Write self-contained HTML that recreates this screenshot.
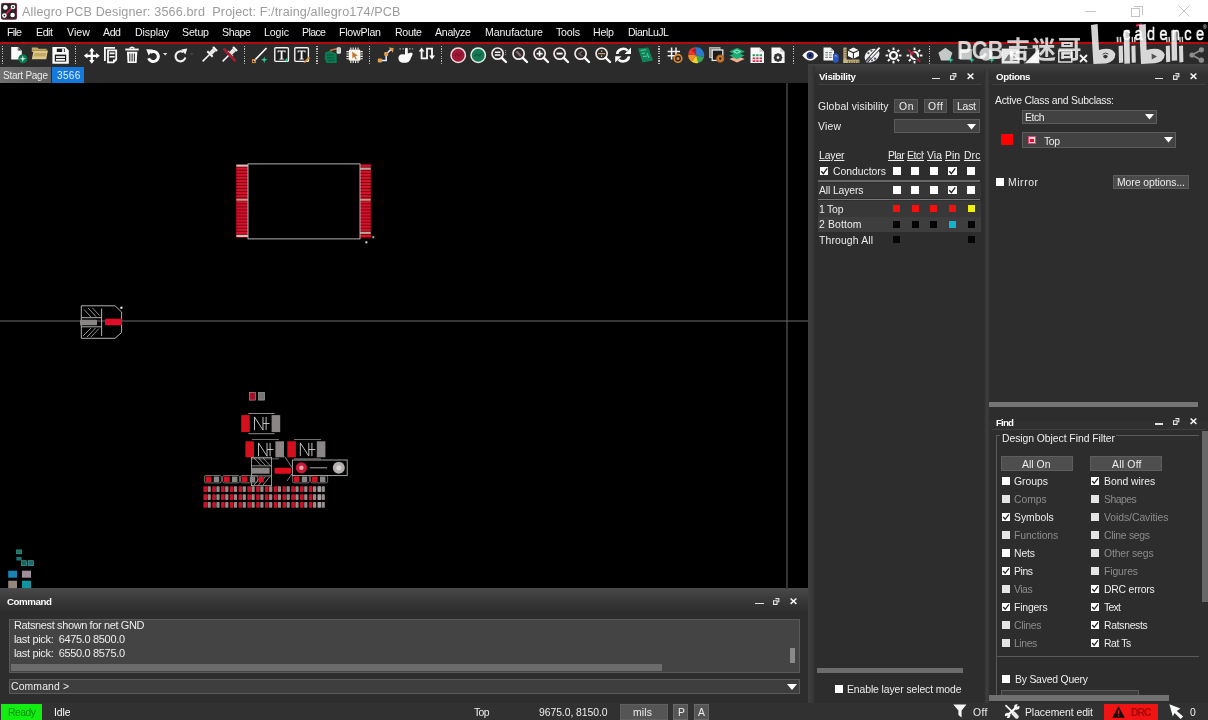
<!DOCTYPE html>
<html lang="en"><head><meta charset="utf-8"><title>Allegro PCB Designer: 3566.brd</title>
<style>
html,body{margin:0;padding:0;background:#2d2d2d;overflow:hidden}
#app{position:relative;width:1208px;height:720px;overflow:hidden;background:#2d2d2d;font-family:"Liberation Sans", sans-serif;}
#app div,#app span,#app svg{position:absolute;box-sizing:border-box}
#app span{white-space:pre;line-height:1;will-change:transform;}
#app svg{overflow:visible}
</style></head><body><div id="app">
<div style="left:0px;top:0px;width:1208px;height:22px;background:#ffffff;"></div>
<svg style="left:1.4px;top:3px" width="16" height="16.6" viewBox="0 0 16 16.6"><rect x="0" y="0" width="16" height="16.6" rx="2.2" fill="#2a2228"/><rect x="0.4" y="0.4" width="15.2" height="15.8" rx="2" fill="none" stroke="#8a3048" stroke-width="0.8"/><path d="M3.4 12.6 L12 4" stroke="#c02848" stroke-width="1.8"/><circle cx="4.4" cy="4.4" r="2.3" fill="#fff"/><circle cx="12" cy="4" r="2.3" fill="#fff"/><circle cx="12" cy="4" r="0.9" fill="#222"/><circle cx="3.4" cy="12.6" r="2.3" fill="#fff"/><circle cx="3.4" cy="12.6" r="0.9" fill="#222"/><circle cx="11.6" cy="12" r="2.3" fill="#fff"/></svg>
<div style="left:1084.5px;top:10.5px;width:11px;height:1px;background:#c8c8c8;"></div>
<div style="left:1131px;top:7.5px;width:9px;height:9px;background:transparent;border:1px solid #c4c4c4"></div>
<div style="left:1133.5px;top:5.5px;width:9px;height:9px;background:transparent;border:1px solid #c4c4c4;border-left:none;border-bottom:none"></div>
<svg style="left:1178px;top:5px" width="12" height="12" viewBox="0 0 12 12"><path d="M0.5 0.5 L11.5 11.5 M11.5 0.5 L0.5 11.5" stroke="#c4c4c4" stroke-width="1"/></svg>
<div style="left:0px;top:22px;width:1208px;height:20px;background:#000000;"></div>
<div style="left:0px;top:42px;width:1208px;height:2px;background:#b80a0a;"></div>
<div style="left:0px;top:44px;width:1208px;height:23px;background:#2b2b2b;"></div>
<div style="left:0px;top:67px;width:808px;height:16px;background:#2b2b2b;"></div>
<div style="left:0px;top:67px;width:51.2px;height:15.6px;background:#666666;background:linear-gradient(90deg,#707070,#5e5e5e)"></div>
<div style="left:52px;top:67px;width:32px;height:15.6px;background:#1478dc;"></div>
<div style="left:0px;top:82.6px;width:808px;height:505.2px;background:#000000;"></div>
<div style="left:808px;top:64px;width:400px;height:14px;background:#383838;background:linear-gradient(180deg,#424242 0,#3a3a3a 35%,#313131 75%,#303030)"></div>
<div style="left:808px;top:66px;width:7px;height:637px;background:#3a3a3a;background:linear-gradient(90deg,#3e3e3e 0,#3a3a3a 60%,#2e2e2e)"></div>
<div style="left:984px;top:71px;width:6px;height:632px;background:#383838;background:linear-gradient(90deg,#2d2d2d,#404040 50%,#2d2d2d)"></div>
<div style="left:816px;top:76px;width:168px;height:8px;background:#303030;"></div>
<div style="left:818px;top:84px;width:164px;height:1px;background:#3f3f3f;"></div>
<div style="left:931.7px;top:78.1px;width:8.6px;height:1.4px;background:#e0e0e0;"></div>
<svg style="left:949.8px;top:73px" width="6.4" height="7" viewBox="0 0 7 7.4"><path d="M2.6 0.6 H6.4 V4 H4.6 M0.6 2.8 H4.4 V6.8 H0.6 Z" stroke="#e4e4e4" stroke-width="1.2" fill="none"/></svg>
<svg style="left:967px;top:73px" width="7" height="6.4" viewBox="0 0 7 6.4"><path d="M0.6 0.5 L6.4 5.9 M6.4 0.5 L0.6 5.9" stroke="#f4f4f4" stroke-width="1.5"/></svg>
<div style="left:990px;top:76px;width:218px;height:8px;background:#303030;"></div>
<div style="left:992px;top:84px;width:214px;height:1px;background:#3f3f3f;"></div>
<div style="left:1154.7px;top:78.1px;width:8.6px;height:1.4px;background:#e0e0e0;"></div>
<svg style="left:1173.3px;top:73px" width="6.4" height="7" viewBox="0 0 7 7.4"><path d="M2.6 0.6 H6.4 V4 H4.6 M0.6 2.8 H4.4 V6.8 H0.6 Z" stroke="#e4e4e4" stroke-width="1.2" fill="none"/></svg>
<svg style="left:1190px;top:73px" width="7" height="6.4" viewBox="0 0 7 6.4"><path d="M0.6 0.5 L6.4 5.9 M6.4 0.5 L0.6 5.9" stroke="#f4f4f4" stroke-width="1.5"/></svg>
<div style="left:990px;top:421.2px;width:218px;height:8px;background:#303030;"></div>
<div style="left:992px;top:429.2px;width:214px;height:1px;background:#3f3f3f;"></div>
<div style="left:1154.7px;top:423.3px;width:8.6px;height:1.4px;background:#e0e0e0;"></div>
<svg style="left:1173.3px;top:418.2px" width="6.4" height="7" viewBox="0 0 7 7.4"><path d="M2.6 0.6 H6.4 V4 H4.6 M0.6 2.8 H4.4 V6.8 H0.6 Z" stroke="#e4e4e4" stroke-width="1.2" fill="none"/></svg>
<svg style="left:1190px;top:418.2px" width="7" height="6.4" viewBox="0 0 7 6.4"><path d="M0.6 0.5 L6.4 5.9 M6.4 0.5 L0.6 5.9" stroke="#f4f4f4" stroke-width="1.5"/></svg>
<div style="left:0px;top:587.8px;width:808px;height:24px;background:#3a3a3a;background:linear-gradient(180deg,#4a4a4a 0,#3c3c3c 40%,#2f2f2f 90%,#2d2d2d)"></div>
<div style="left:755.2px;top:602.7px;width:8.6px;height:1.4px;background:#e0e0e0;"></div>
<svg style="left:773.3px;top:597.6px" width="6.4" height="7" viewBox="0 0 7 7.4"><path d="M2.6 0.6 H6.4 V4 H4.6 M0.6 2.8 H4.4 V6.8 H0.6 Z" stroke="#e4e4e4" stroke-width="1.2" fill="none"/></svg>
<svg style="left:790px;top:597.6px" width="7" height="6.4" viewBox="0 0 7 6.4"><path d="M0.6 0.5 L6.4 5.9 M6.4 0.5 L0.6 5.9" stroke="#f4f4f4" stroke-width="1.5"/></svg>
<div style="left:894px;top:98.5px;width:23.5px;height:14.5px;background:#464646;border:1px solid #585858"></div>
<div style="left:923.5px;top:98.5px;width:23.5px;height:14.5px;background:#464646;border:1px solid #585858"></div>
<div style="left:952.5px;top:98.5px;width:27.5px;height:14.5px;background:#464646;border:1px solid #585858"></div>
<div style="left:894px;top:119px;width:86px;height:14px;background:#424242;border:1px solid #5c5c5c"></div>
<svg style="left:967px;top:123.5px" width="9" height="6" viewBox="0 0 9 6"><path d="M0 0 H9 L4.5 5.5 Z" fill="#ffffff"/></svg>
<div style="left:820px;top:166.8px;width:8.4px;height:8.4px;background:#ffffff;"></div>
<svg style="left:820px;top:166.8px" width="8.4" height="8.4" viewBox="0 0 8 8"><path d="M1.2 4 L3.2 6.3 L6.9 1.3" stroke="#222" stroke-width="1.3" fill="none"/></svg>
<div style="left:892.7px;top:166.8px;width:8.4px;height:8.4px;background:#ffffff;"></div>
<div style="left:911.1px;top:166.8px;width:8.4px;height:8.4px;background:#ffffff;"></div>
<div style="left:929.7px;top:166.8px;width:8.4px;height:8.4px;background:#ffffff;"></div>
<div style="left:948.4px;top:166.8px;width:8.4px;height:8.4px;background:#ffffff;"></div>
<svg style="left:948.4px;top:166.8px" width="8.4" height="8.4" viewBox="0 0 8 8"><path d="M1.2 4 L3.2 6.3 L6.9 1.3" stroke="#222" stroke-width="1.3" fill="none"/></svg>
<div style="left:967.1px;top:166.8px;width:8.4px;height:8.4px;background:#ffffff;"></div>
<div style="left:818px;top:180px;width:162px;height:1.6px;background:#686868;"></div>
<div style="left:817.5px;top:183px;width:163px;height:15px;background:#363636;"></div>
<div style="left:892.7px;top:186px;width:8.4px;height:8.4px;background:#ffffff;"></div>
<div style="left:911.1px;top:186px;width:8.4px;height:8.4px;background:#ffffff;"></div>
<div style="left:929.7px;top:186px;width:8.4px;height:8.4px;background:#ffffff;"></div>
<div style="left:948.4px;top:186px;width:8.4px;height:8.4px;background:#ffffff;"></div>
<svg style="left:948.4px;top:186px" width="8.4" height="8.4" viewBox="0 0 8 8"><path d="M1.2 4 L3.2 6.3 L6.9 1.3" stroke="#222" stroke-width="1.3" fill="none"/></svg>
<div style="left:967.1px;top:186px;width:8.4px;height:8.4px;background:#ffffff;"></div>
<div style="left:818px;top:198.6px;width:162px;height:1.2px;background:#7a7a7a;"></div>
<div style="left:817.5px;top:201px;width:163px;height:15.5px;background:#383838;"></div>
<div style="left:893.3px;top:205.2px;width:7.2px;height:7.2px;background:#f51010;"></div>
<div style="left:911.7px;top:205.2px;width:7.2px;height:7.2px;background:#f51010;"></div>
<div style="left:930.3px;top:205.2px;width:7.2px;height:7.2px;background:#f51010;"></div>
<div style="left:949px;top:205.2px;width:7.2px;height:7.2px;background:#f51010;"></div>
<div style="left:967.7px;top:205.2px;width:7.2px;height:7.2px;background:#eef010;"></div>
<div style="left:817.5px;top:216.5px;width:163px;height:15.5px;background:#3e3e3e;"></div>
<div style="left:893.3px;top:220.8px;width:7.2px;height:7.2px;background:#050505;"></div>
<div style="left:911.7px;top:220.8px;width:7.2px;height:7.2px;background:#050505;"></div>
<div style="left:930.3px;top:220.8px;width:7.2px;height:7.2px;background:#050505;"></div>
<div style="left:949px;top:220.8px;width:7.2px;height:7.2px;background:#14b4d0;"></div>
<div style="left:967.7px;top:220.8px;width:7.2px;height:7.2px;background:#050505;"></div>
<div style="left:893.3px;top:236.2px;width:7.2px;height:7.2px;background:#050505;"></div>
<div style="left:967.7px;top:236.2px;width:7.2px;height:7.2px;background:#050505;"></div>
<div style="left:817px;top:668px;width:146px;height:5px;background:#6c6c6c;"></div>
<div style="left:834.5px;top:685px;width:8px;height:8px;background:#ffffff;"></div>
<div style="left:1022px;top:109.7px;width:134.5px;height:14px;background:#424242;border:1px solid #5c5c5c"></div>
<svg style="left:1144.5px;top:114.2px" width="9" height="6" viewBox="0 0 9 6"><path d="M0 0 H9 L4.5 5.5 Z" fill="#ffffff"/></svg>
<div style="left:1001px;top:134px;width:12px;height:11.3px;background:#ff0000;"></div>
<div style="left:1022px;top:132px;width:153.5px;height:15.5px;background:#424242;border:1px solid #5c5c5c"></div>
<svg style="left:1163.5px;top:137.25px" width="9" height="6" viewBox="0 0 9 6"><path d="M0 0 H9 L4.5 5.5 Z" fill="#ffffff"/></svg>
<div style="left:1028px;top:136.3px;width:8px;height:7.8px;background:#ffe0e6;border:1.5px solid #f0406a"></div>
<div style="left:1030.3px;top:138.5px;width:3.4px;height:3.4px;background:#f00828;"></div>
<div style="left:995.9px;top:178.1px;width:7.8px;height:7.8px;background:#ffffff;"></div>
<div style="left:1112.5px;top:174.5px;width:76px;height:14.5px;background:#4a4a4a;border:1px solid #5c5c5c"></div>
<div style="left:989px;top:401.8px;width:209px;height:5.6px;background:#767676;"></div>
<div style="left:1202px;top:431px;width:5.5px;height:171px;background:#676767;"></div>
<div style="left:996px;top:435px;width:1px;height:260px;background:#5a5a5a;"></div>
<div style="left:996px;top:435px;width:4px;height:1px;background:#5a5a5a;"></div>
<div style="left:1116px;top:435px;width:83px;height:1px;background:#5a5a5a;"></div>
<div style="left:996px;top:656px;width:203px;height:1px;background:#5a5a5a;"></div>
<div style="left:1000.5px;top:456.2px;width:72.5px;height:14.8px;background:#4e4e4e;border:1px solid #5e5e5e"></div>
<div style="left:1090px;top:456.2px;width:72px;height:14.8px;background:#4e4e4e;border:1px solid #5e5e5e"></div>
<div style="left:1001.8px;top:477px;width:8px;height:8px;background:#ffffff;"></div>
<div style="left:1001.8px;top:495px;width:8px;height:8px;background:#e4e4e4;"></div>
<div style="left:1001.8px;top:513px;width:8px;height:8px;background:#ffffff;"></div>
<svg style="left:1001.8px;top:513px" width="8" height="8" viewBox="0 0 8 8"><path d="M1.2 4 L3.2 6.3 L6.9 1.3" stroke="#222" stroke-width="1.3" fill="none"/></svg>
<div style="left:1001.8px;top:531px;width:8px;height:8px;background:#e4e4e4;"></div>
<div style="left:1001.8px;top:549px;width:8px;height:8px;background:#ffffff;"></div>
<div style="left:1001.8px;top:567px;width:8px;height:8px;background:#ffffff;"></div>
<svg style="left:1001.8px;top:567px" width="8" height="8" viewBox="0 0 8 8"><path d="M1.2 4 L3.2 6.3 L6.9 1.3" stroke="#222" stroke-width="1.3" fill="none"/></svg>
<div style="left:1001.8px;top:585px;width:8px;height:8px;background:#e4e4e4;"></div>
<div style="left:1001.8px;top:603px;width:8px;height:8px;background:#ffffff;"></div>
<svg style="left:1001.8px;top:603px" width="8" height="8" viewBox="0 0 8 8"><path d="M1.2 4 L3.2 6.3 L6.9 1.3" stroke="#222" stroke-width="1.3" fill="none"/></svg>
<div style="left:1001.8px;top:621px;width:8px;height:8px;background:#e4e4e4;"></div>
<div style="left:1001.8px;top:639px;width:8px;height:8px;background:#e4e4e4;"></div>
<div style="left:1091px;top:477px;width:8px;height:8px;background:#ffffff;"></div>
<svg style="left:1091px;top:477px" width="8" height="8" viewBox="0 0 8 8"><path d="M1.2 4 L3.2 6.3 L6.9 1.3" stroke="#222" stroke-width="1.3" fill="none"/></svg>
<div style="left:1091px;top:495px;width:8px;height:8px;background:#e4e4e4;"></div>
<div style="left:1091px;top:513px;width:8px;height:8px;background:#e4e4e4;"></div>
<div style="left:1091px;top:531px;width:8px;height:8px;background:#e4e4e4;"></div>
<div style="left:1091px;top:549px;width:8px;height:8px;background:#e4e4e4;"></div>
<div style="left:1091px;top:567px;width:8px;height:8px;background:#e4e4e4;"></div>
<div style="left:1091px;top:585px;width:8px;height:8px;background:#ffffff;"></div>
<svg style="left:1091px;top:585px" width="8" height="8" viewBox="0 0 8 8"><path d="M1.2 4 L3.2 6.3 L6.9 1.3" stroke="#222" stroke-width="1.3" fill="none"/></svg>
<div style="left:1091px;top:603px;width:8px;height:8px;background:#ffffff;"></div>
<svg style="left:1091px;top:603px" width="8" height="8" viewBox="0 0 8 8"><path d="M1.2 4 L3.2 6.3 L6.9 1.3" stroke="#222" stroke-width="1.3" fill="none"/></svg>
<div style="left:1091px;top:621px;width:8px;height:8px;background:#ffffff;"></div>
<svg style="left:1091px;top:621px" width="8" height="8" viewBox="0 0 8 8"><path d="M1.2 4 L3.2 6.3 L6.9 1.3" stroke="#222" stroke-width="1.3" fill="none"/></svg>
<div style="left:1091px;top:639px;width:8px;height:8px;background:#ffffff;"></div>
<svg style="left:1091px;top:639px" width="8" height="8" viewBox="0 0 8 8"><path d="M1.2 4 L3.2 6.3 L6.9 1.3" stroke="#222" stroke-width="1.3" fill="none"/></svg>
<div style="left:1002px;top:675px;width:8px;height:8px;background:#ffffff;"></div>
<div style="left:1001px;top:689.5px;width:138px;height:6px;background:#3c3c3c;border:1px solid #5a5a5a;border-bottom:none"></div>
<div style="left:988.5px;top:695px;width:180px;height:5.5px;background:#707070;"></div>
<div style="left:8.5px;top:618.5px;width:791.5px;height:54.2px;background:#444444;border:1px solid #5a5a5a"></div>
<div style="left:11px;top:664px;width:651px;height:7px;background:#6c6c6c;"></div>
<div style="left:789.5px;top:648px;width:5px;height:15px;background:#8a8a8a;"></div>
<div style="left:8.5px;top:678.5px;width:791.5px;height:15px;background:#3e3e3e;border:1px solid #5a5a5a"></div>
<svg style="left:787px;top:683.5px" width="10" height="6" viewBox="0 0 10 6"><path d="M0 0 H10 L5 6 Z" fill="#ffffff"/></svg>
<div style="left:0px;top:702.6px;width:1208px;height:18px;background:#313131;"></div>
<div style="left:1px;top:704px;width:41px;height:16px;background:#12ee12;"></div>
<div style="left:619.5px;top:704px;width:48.5px;height:15.6px;background:#555555;border:1px solid #606060"></div>
<div style="left:673px;top:704px;width:15px;height:15.6px;background:#555555;border:1px solid #686868"></div>
<div style="left:694px;top:704px;width:15px;height:15.6px;background:#555555;border:1px solid #686868"></div>
<svg style="left:953px;top:704px" width="14" height="14" viewBox="0 0 14 14"><path d="M0.3 0.5 H13.5 L8.6 6.5 V13.5 L5.4 11 V6.5 Z" fill="#f4f4f4"/></svg>
<svg style="left:1003px;top:703px" width="19" height="17" viewBox="1003 703 19 17"><path d="M1006 705.6 L1012.6 712.2" stroke="#f4f4f4" stroke-width="1.8" stroke-linecap="round"/><path d="M1013.6 713.4 L1016.6 716.6" stroke="#e8e8e8" stroke-width="4.2" stroke-linecap="round"/><path d="M1008.2 714.8 L1016.2 707.4" stroke="#f8f8f8" stroke-width="2.2"/><circle cx="1016.8" cy="707" r="2.7" fill="#f8f8f8"/><path d="M1016.6 706.8 L1018.2 703.4 L1020.6 705.6 Z" fill="#2b2b2b"/><circle cx="1007.6" cy="715.4" r="2.7" fill="#f8f8f8"/><path d="M1007.8 715.6 L1006.2 719 L1003.8 716.8 Z" fill="#2b2b2b"/></svg>
<div style="left:1104.2px;top:704px;width:53.6px;height:16px;background:#f01414;"></div>
<svg style="left:1111.5px;top:705.5px" width="13" height="12" viewBox="0 0 13 12"><path d="M6.5 0.3 L12.8 11.7 H0.2 Z" fill="#111"/><path d="M6.5 4 V8" stroke="#f01414" stroke-width="1.4"/><circle cx="6.5" cy="9.8" r="0.8" fill="#f01414"/></svg>
<svg style="left:1168px;top:703px" width="17" height="17" viewBox="1168 703 17 17"><path d="M1169.4 704.3 L1180.4 708.4 L1176.8 711 L1183.2 716.6 L1180.6 719 L1174.6 713 L1172.8 716.6 Z" fill="#f8f8f8"/></svg>
<div style="left:2px;top:46px;width:1.4px;height:18px;background:repeating-linear-gradient(180deg,#b8b8b8 0,#b8b8b8 1.2px,transparent 1.2px,transparent 2.4px)"></div>
<div style="left:75px;top:46px;width:1.4px;height:18px;background:repeating-linear-gradient(180deg,#b8b8b8 0,#b8b8b8 1.2px,transparent 1.2px,transparent 2.4px)"></div>
<div style="left:243.5px;top:46px;width:1.4px;height:18px;background:repeating-linear-gradient(180deg,#b8b8b8 0,#b8b8b8 1.2px,transparent 1.2px,transparent 2.4px)"></div>
<div style="left:316.2px;top:46px;width:1.4px;height:18px;background:repeating-linear-gradient(180deg,#b8b8b8 0,#b8b8b8 1.2px,transparent 1.2px,transparent 2.4px)"></div>
<div style="left:368.5px;top:46px;width:1.4px;height:18px;background:repeating-linear-gradient(180deg,#b8b8b8 0,#b8b8b8 1.2px,transparent 1.2px,transparent 2.4px)"></div>
<div style="left:441px;top:46px;width:1.4px;height:18px;background:repeating-linear-gradient(180deg,#b8b8b8 0,#b8b8b8 1.2px,transparent 1.2px,transparent 2.4px)"></div>
<div style="left:658.3px;top:46px;width:1.4px;height:18px;background:repeating-linear-gradient(180deg,#b8b8b8 0,#b8b8b8 1.2px,transparent 1.2px,transparent 2.4px)"></div>
<div style="left:793px;top:46px;width:1.4px;height:18px;background:repeating-linear-gradient(180deg,#b8b8b8 0,#b8b8b8 1.2px,transparent 1.2px,transparent 2.4px)"></div>
<div style="left:928.5px;top:46px;width:1.4px;height:18px;background:repeating-linear-gradient(180deg,#b8b8b8 0,#b8b8b8 1.2px,transparent 1.2px,transparent 2.4px)"></div>
<svg style="left:10px;top:46px" width="20" height="18" viewBox="10 46 20 18"><path d="M11.2 47 H18 L21.8 50.8 V59.6 H11.2 Z" fill="#fbfbfb"/><path d="M17.8 47 L21.8 51 H17.8 Z" fill="#3a3a3a"/><path d="M18 47.2 V50.8 H21.6" fill="none" stroke="#d0d0d0" stroke-width="0.8"/><circle cx="22.8" cy="58.8" r="4.5" fill="#0b7a50"/><path d="M22.8 55.6 L23.6 58 L26 58.8 L23.6 59.6 L22.8 62 L22 59.6 L19.6 58.8 L22 58 Z" fill="#c8f4e4"/></svg>
<svg style="left:31px;top:46px" width="18" height="15" viewBox="31 46 18 15"><path d="M31.8 47.6 H37.4 L38.6 48.8 H46.6 V52 H31.8 Z" fill="#c8ac68"/><path d="M33.6 50.4 H47.9 L46.2 59.3 H31.8 Z" fill="#e0c888"/><path d="M34.4 53 H46.4 L45.6 56.4 H33.8 Z" fill="#c4a866"/><path d="M32 50.3 H47.6" stroke="#8a7440" stroke-width="0.7"/></svg>
<svg style="left:52px;top:46px" width="18" height="18" viewBox="52 46 18 18"><path d="M52.4 47 H65.4 L68.8 50.4 V63.7 H52.4 Z" fill="#fbfbfb"/><rect x="56.8" y="48.6" width="8" height="3.4" fill="#1c1c1c"/><rect x="62.2" y="48.6" width="1.7" height="3.4" fill="#fbfbfb"/><rect x="54.8" y="54.6" width="11.4" height="7" fill="#1c1c1c"/><rect x="56" y="56.2" width="9" height="1.7" fill="#fbfbfb"/><rect x="56" y="59" width="9" height="1.7" fill="#fbfbfb"/></svg>
<svg style="left:84.2px;top:47.8px" width="15.6" height="15.6" viewBox="0 0 16 16"><path d="M8 1.5 V14.5 M1.5 8 H14.5" stroke="#fafafa" stroke-width="2.3"/><path d="M8 -0.2 L10.8 3.6 H5.2 Z M8 16.2 L10.8 12.4 H5.2 Z M-0.2 8 L3.6 5.2 V10.8 Z M16.2 8 L12.4 5.2 V10.8 Z" fill="#fafafa"/></svg>
<svg style="left:103px;top:46px" width="16" height="18" viewBox="103 46 16 18"><path d="M104.9 61 V47.8 H115" stroke="#fafafa" stroke-width="1.8" fill="none"/><path d="M108 50.4 H116.2 V59.6 L113.4 62.4 H108 Z" fill="none" stroke="#fafafa" stroke-width="1.8"/><path d="M109.6 53.4 H114.6 M109.6 56.8 H114.6" stroke="#fafafa" stroke-width="1.6"/><path d="M113 62.6 V59.4 H116.4 Z" fill="#fafafa"/></svg>
<svg style="left:124px;top:46px" width="16" height="18" viewBox="124 46 16 18"><path d="M125.3 49.5 H138.7" stroke="#fafafa" stroke-width="1.9"/><path d="M129.6 48.6 Q132 45.8 134.4 48.6" stroke="#fafafa" stroke-width="1.5" fill="none"/><path d="M126.9 51.8 H137.3 L136.6 63.1 H127.6 Z" fill="#fafafa"/><path d="M129.8 53.4 V61.4 M132.1 53.4 V61.4 M134.4 53.4 V61.4" stroke="#333" stroke-width="1.1"/></svg>
<svg style="left:145.5px;top:47px" width="22" height="16" viewBox="0 0 22 16"><path d="M4.2 5.6 A5 5 0 1 1 2.6 11.2" stroke="#fafafa" stroke-width="3" fill="none"/><path d="M0.3 2.2 L7 2.6 L2.6 8.6 Z" fill="#fafafa"/><path d="M17 6 H21.4 L19.2 8.6 Z" fill="#e0e0e0"/></svg>
<svg style="left:173px;top:47px" width="22" height="16" viewBox="0 0 22 16"><path d="M10.4 5.2 A5 5 0 1 0 12.4 10.6" stroke="#f0f0f0" stroke-width="2.1" fill="none"/><path d="M14.3 1.6 L8.2 2.4 L12.4 7.6 Z" fill="#f0f0f0"/><path d="M16.8 6.2 H20.6 L18.7 8.4 Z" fill="#4a4a4a"/></svg>
<svg style="left:200.5px;top:47px" width="16" height="16" viewBox="0 0 16 16"><g transform="rotate(45 8 8)"><rect x="5.2" y="-1.6" width="5.6" height="2.2" fill="#fafafa"/><rect x="6" y="0.6" width="4" height="5" fill="#e8e8e8"/><rect x="4.2" y="5.6" width="7.6" height="2" fill="#fafafa"/><path d="M8 7.6 V17" stroke="#fafafa" stroke-width="1.5"/></g></svg>
<svg style="left:221px;top:47px" width="16" height="16" viewBox="0 0 16 16"><g transform="rotate(45 8 8)"><rect x="5.2" y="-1.6" width="5.6" height="2.2" fill="#fafafa"/><rect x="6" y="0.6" width="4" height="5" fill="#e8e8e8"/><rect x="4.2" y="5.6" width="7.6" height="2" fill="#fafafa"/><path d="M8 7.6 V17" stroke="#fafafa" stroke-width="1.5"/></g><path d="M2.5 1.5 L14.5 14" stroke="#a81c30" stroke-width="2.6"/></svg>
<svg style="left:252.3px;top:47px" width="16" height="17" viewBox="0 0 16 17"><path d="M2 14 L14.5 1" stroke="#fafafa" stroke-width="1.7"/><rect x="0.4" y="12.6" width="3" height="3" fill="none" stroke="#e09030" stroke-width="1"/><path d="M12.2 9.5 L13 12 L15.6 12.8 L13 13.6 L12.2 16.2 L11.4 13.6 L8.8 12.8 L11.4 12 Z" fill="#2fd0a0"/></svg>
<svg style="left:273.5px;top:47px" width="16" height="16" viewBox="0 0 16 16"><rect x="0.8" y="0.8" width="13.6" height="13.6" rx="1" fill="#1e1e1e" stroke="#f4f4f4" stroke-width="1.4"/><path d="M3.6 3.4 H11.6 V5.4 H10.8 L10.4 4.6 H8.5 V11.4 L9.8 11.8 V12.4 H5.4 V11.8 L6.7 11.4 V4.6 H4.8 L4.4 5.4 H3.6 Z" fill="#fafafa"/><path d="M12.4 10.6 L13 12.4 L14.9 13 L13 13.6 L12.4 15.6 L11.8 13.6 L9.9 13 L11.8 12.4 Z" fill="#2fd0a0"/></svg>
<svg style="left:294.2px;top:47px" width="17" height="17" viewBox="0 0 17 17"><rect x="0.8" y="0.8" width="13.6" height="13.6" rx="1" fill="#1e1e1e" stroke="#f4f4f4" stroke-width="1.4"/><path d="M3.6 3.4 H11.6 V5.4 H10.8 L10.4 4.6 H8.5 V11.4 L9.8 11.8 V12.4 H5.4 V11.8 L6.7 11.4 V4.6 H4.8 L4.4 5.4 H3.6 Z" fill="#fafafa"/><path d="M10 14.8 L14.6 9.6 L16 11 L11.2 15.8 L9.6 16 Z" fill="#d89040"/></svg>
<svg style="left:323.6px;top:47px" width="17.4" height="16.4" viewBox="0 0 17.4 16.4"><path d="M1.2 5.4 L6.4 3.4 L9 5.2 L12.6 6.6 L12.8 16 H2.4 L0.6 11 Z" fill="#0c7a52"/><path d="M2.6 8.4 L9.6 7.6 M3 11 L10.4 10.6 M4 13.6 L11 13.4" stroke="#0a5c3e" stroke-width="1.3"/><path d="M6 3.6 L12.6 1.8" stroke="#c87838" stroke-width="1.6"/><rect x="12.6" y="0.2" width="4.4" height="6.6" rx="1.4" fill="#e4e4e4"/><path d="M13.6 2 H16 M13.6 4 H16" stroke="#999" stroke-width="0.7"/></svg>
<svg style="left:346px;top:47px" width="17" height="16.4" viewBox="0 0 17 16.4"><rect x="2.8" y="2.6" width="11.6" height="11.2" rx="1.4" fill="#fbf6ee"/><path d="M4.8 0.4 V2.6 M7.2 0.4 V2.6 M9.6 0.4 V2.6 M12 0.4 V2.6 M4.8 13.8 V16 M7.2 13.8 V16 M9.6 13.8 V16 M12 13.8 V16 M0.4 4.6 H2.8 M0.4 7 H2.8 M0.4 9.4 H2.8 M0.4 11.8 H2.8 M14.4 4.6 H16.8 M14.4 7 H16.8 M14.4 9.4 H16.8 M14.4 11.8 H16.8" stroke="#f4f0ea" stroke-width="1.1"/><path d="M6.2 4.8 L11.8 8.6 L9.4 9.2 L10.8 12 L9.6 12.6 L8.2 9.8 L6.4 11.4 Z" fill="#c07830"/></svg>
<svg style="left:376.6px;top:47px" width="18" height="16.4" viewBox="0 0 18 16.4"><path d="M3 13.6 H9.2 V7 L14 2.4" stroke="#20284a" stroke-width="3.4" fill="none"/><path d="M3 13.6 H9.2 V7 L14 2.4" stroke="#f0f0f0" stroke-width="1.5" fill="none"/><rect x="0.8" y="11.6" width="4.2" height="4" rx="1" fill="#e0a048"/><rect x="7.2" y="5" width="4" height="4" rx="1" fill="#e0a048"/><path d="M11.6 0.6 L16.6 1 L16 5.8 Z" fill="#e0a048"/></svg>
<svg style="left:398px;top:47px" width="16" height="16.4" viewBox="0 0 16 16.4"><path d="M1.4 1.8 H3 M4.4 1.8 H6 M11 1.8 H12.6 M13.8 1.8 H15.2" stroke="#9a9a9a" stroke-width="1.2"/><path d="M7 7.4 V1.6 Q8.4 0 9.8 1.6 V6.6 L13.2 5.4 Q15 5.6 14.6 7.6 L12.8 11.2 Q11.4 15.8 7.4 15.8 H4.4 Q1 15.4 0.4 11.6 Q0.2 8.6 2.6 7.6 Q4.6 7 7 7.4 Z" fill="#fbfbfb"/></svg>
<svg style="left:417px;top:46px" width="20" height="16" viewBox="417 46 20 16"><path d="M421.6 50 V58.3 H427 V48.6 H432 V56" stroke="#fafafa" stroke-width="1.8" fill="none"/><path d="M418.8 51.4 L421.6 47.4 L424.4 51.4 Z" fill="#fafafa"/><path d="M429 55.4 H435 L432 59.6 Z" fill="#fafafa"/></svg>
<svg style="left:449.8px;top:46.8px" width="17" height="17" viewBox="0 0 17 17"><circle cx="8.2" cy="8.2" r="7.2" fill="#a01838" stroke="#f0dede" stroke-width="1.5"/><path d="M4.5 9 L7 7 L9 9 L12 6" stroke="#7c1028" stroke-width="1.2" fill="none"/></svg>
<svg style="left:470.4px;top:46.8px" width="17" height="17" viewBox="0 0 17 17"><circle cx="8.2" cy="8.2" r="7.2" fill="#157a54" stroke="#e2f0ea" stroke-width="1.5"/><path d="M4.5 9 L7 7 L9 9 L12 6" stroke="#0e5c3e" stroke-width="1.2" fill="none"/></svg>
<svg style="left:491.3px;top:47px" width="16" height="16" viewBox="0 0 16 16"><circle cx="6.6" cy="6.6" r="5.6" fill="none" stroke="#f2e6e6" stroke-width="1.7"/><path d="M10.8 10.8 L15 15" stroke="#fafafa" stroke-width="2.4" stroke-linecap="round"/><path d="M3.8 5.2 H9.4 M3.8 8 H9.4" stroke="#fafafa" stroke-width="1.5"/><path d="M14.6 3 V9" stroke="#999" stroke-width="1" stroke-dasharray="1 1"/></svg>
<svg style="left:512px;top:47px" width="16" height="16" viewBox="0 0 16 16"><circle cx="6.6" cy="6.6" r="5.6" fill="none" stroke="#f2e6e6" stroke-width="1.7"/><path d="M10.8 10.8 L15 15" stroke="#fafafa" stroke-width="2.4" stroke-linecap="round"/><path d="M4.4 4.4 L8.8 8.8" stroke="#8a6a6a" stroke-width="2.4"/></svg>
<svg style="left:532.7px;top:47px" width="16" height="16" viewBox="0 0 16 16"><circle cx="6.6" cy="6.6" r="5.6" fill="none" stroke="#f2e6e6" stroke-width="1.7"/><path d="M10.8 10.8 L15 15" stroke="#fafafa" stroke-width="2.4" stroke-linecap="round"/><path d="M3.6 6.6 H9.6 M6.6 3.6 V9.6" stroke="#fafafa" stroke-width="1.7"/></svg>
<svg style="left:553.4px;top:47px" width="16" height="16" viewBox="0 0 16 16"><circle cx="6.6" cy="6.6" r="5.6" fill="none" stroke="#f2e6e6" stroke-width="1.7"/><path d="M10.8 10.8 L15 15" stroke="#fafafa" stroke-width="2.4" stroke-linecap="round"/><path d="M3.6 6.6 H9.6" stroke="#fafafa" stroke-width="1.9"/></svg>
<svg style="left:574px;top:47px" width="16" height="16" viewBox="0 0 16 16"><circle cx="6.6" cy="6.6" r="5.6" fill="none" stroke="#f2e6e6" stroke-width="1.7"/><path d="M10.8 10.8 L15 15" stroke="#fafafa" stroke-width="2.4" stroke-linecap="round"/><path d="M8.4 4.2 L5 6.8 L8.4 9.2" stroke="#7a6262" stroke-width="1.4" fill="none"/></svg>
<svg style="left:595px;top:47px" width="16" height="16" viewBox="0 0 16 16"><circle cx="6.6" cy="6.6" r="5.6" fill="none" stroke="#f2e6e6" stroke-width="1.7"/><path d="M10.8 10.8 L15 15" stroke="#fafafa" stroke-width="2.4" stroke-linecap="round"/><path d="M3.2 6.6 H10 M6.6 3.2 V5 M6.6 8.2 V10" stroke="#c8a070" stroke-width="1.2"/></svg>
<svg style="left:615px;top:47px" width="17" height="16" viewBox="0 0 17 16"><path d="M2.2 7 A6 5.4 0 0 1 12.6 3.6" stroke="#fafafa" stroke-width="2.6" fill="none"/><path d="M16 0.6 V7 H9.6 Z" fill="#fafafa"/><path d="M14 9.4 A6 5.4 0 0 1 3.6 12.6" stroke="#fafafa" stroke-width="2.6" fill="none"/><path d="M0.2 15.6 V9.2 H6.6 Z" fill="#fafafa"/></svg>
<svg style="left:636.6px;top:47px" width="17" height="16" viewBox="0 0 17 16"><path d="M1 1.4 L11.4 0.4 L16 13.4 L5.6 15.6 Z" fill="#0f8458"/><path d="M3.6 3.4 L9 2.8 M4.6 6.4 L8 6 M10 6 L12 11 M6 9.6 L10.4 9" stroke="#5cc8a0" stroke-width="1"/></svg>
<svg style="left:666.8px;top:47px" width="16" height="16" viewBox="0 0 16 16"><path d="M4.6 0.6 V12.6 M9 0.6 V9 M0.6 4.4 H13 M0.6 8.8 H8" stroke="#f0f0f0" stroke-width="1.5"/><circle cx="11" cy="11.4" r="3.8" fill="#2b2b2b" stroke="#e08a30" stroke-width="1.6"/><circle cx="11" cy="11.4" r="1.5" fill="#e08a30"/></svg>
<svg style="left:687.8px;top:46.6px" width="17" height="17" viewBox="0 0 17 17"><path d="M8.20 8.20 L6.81 0.32 A8 8 0 0 1 15.93 10.27 Z" fill="#2a7ad0"/><path d="M8.20 8.20 L15.93 10.27 A8 8 0 0 1 10.27 15.93 Z" fill="#38a850"/><path d="M8.20 8.20 L10.27 15.93 A8 8 0 0 1 3.61 14.75 Z" fill="#f0d030"/><path d="M8.20 8.20 L3.61 14.75 A8 8 0 0 1 0.23 7.50 Z" fill="#f09028"/><path d="M8.20 8.20 L0.23 7.50 A8 8 0 0 1 6.81 0.32 Z" fill="#e83a30"/><path d="M8.2 8.2 L3.4 3 A7 7 0 0 1 8 1.2 Z" fill="#b82028"/></svg>
<svg style="left:708.6px;top:47px" width="16" height="16" viewBox="0 0 16 16"><rect x="0.6" y="0.6" width="10.4" height="10" fill="#8a8a8a" stroke="#b8b8b8" stroke-width="1"/><rect x="3.2" y="3" width="10.6" height="10.4" fill="#1c1c1c" stroke="#e8e8e8" stroke-width="1.3"/><circle cx="11.2" cy="11.6" r="4.2" fill="#a86020"/><circle cx="11.2" cy="11.6" r="2.8" fill="#d08030"/><circle cx="11.2" cy="11.6" r="1.3" fill="#3a2410"/></svg>
<svg style="left:729.3px;top:47px" width="16" height="16" viewBox="0 0 16 16"><path d="M8 8.8 L15.6 12 L8 15.6 L0.4 12 Z" fill="#f0b090"/><path d="M8 5.4 L15.6 8.6 L8 12.2 L0.4 8.6 Z" fill="#18b078"/><path d="M8 7 L15.6 10.2 L8 13.8 L0.4 10.2 Z" fill="#f4ece0" opacity="0"/><path d="M8 0.8 L15.8 4.6 L8 8.8 L0.2 4.6 Z" fill="#1aa872"/><path d="M4.6 4.6 L8 3 L11.4 4.6 L8 6.4 Z" fill="none" stroke="#bff0dc" stroke-width="0.9"/></svg>
<svg style="left:750px;top:46.8px" width="15" height="17" viewBox="0 0 15 17"><path d="M0.5 0.5 H9.6 L14 4.8 V16 H0.5 Z" fill="#fafafa"/><path d="M9.6 0.5 V4.8 H14" fill="#c8c8c8"/><path d="M2.6 7.2 H5.2 V9.2 H2.6 Z M6.2 7.2 H8.6 V9.2 H6.2 Z M9.6 7.2 H12 V9.2 H9.6 Z" fill="#2a9a60"/><path d="M2.6 10.4 H5.2 V12.2 H2.6 Z M6.2 10.4 H8.6 V12.2 H6.2 Z M9.6 10.4 H12 V12.2 H9.6 Z M2.6 13.2 H5.2 V15 H2.6 Z M6.2 13.2 H8.6 V15 H6.2 Z M9.6 13.2 H12 V15 H9.6 Z" fill="#d02848"/></svg>
<svg style="left:770.6px;top:46.8px" width="15" height="17" viewBox="0 0 15 17"><path d="M0.5 0.5 H9.2 L13.6 4.8 V16 H0.5 Z" fill="#fafafa"/><path d="M9.2 0.5 V4.8 H13.6" fill="#c8c8c8"/><circle cx="7" cy="10.6" r="3" fill="none" stroke="#333" stroke-width="2"/><path d="M7 6.2 V15 M2.6 10.6 H11.4 M3.9 7.5 L10.1 13.7 M10.1 7.5 L3.9 13.7" stroke="#333" stroke-width="1.3"/><circle cx="7" cy="10.6" r="1.3" fill="#fafafa"/></svg>
<svg style="left:802px;top:49px" width="17" height="13" viewBox="0 0 17 13"><path d="M0.3 6.5 Q8.2 -3.4 16.2 6.5 Q8.2 16.4 0.3 6.5 Z" fill="#fafafa"/><circle cx="8.2" cy="6.5" r="3.6" fill="#28347a"/><circle cx="8.2" cy="6.5" r="1.5" fill="#10184a"/></svg>
<svg style="left:822.8px;top:46.8px" width="17" height="17" viewBox="0 0 17 17"><path d="M0.5 0.5 H7.6 L11 4 V13.6 H0.5 Z" fill="#f4f4f4"/><path d="M7.6 0.5 V4 H11" fill="#bcbcbc"/><path d="M2.4 5.6 H5 M6 5.6 H8.8 M2.4 8 H5 M6 8 H8.8 M2.4 10.4 H5 M6 10.4 H8.8" stroke="#7a8a7a" stroke-width="1.2"/><path d="M10 7.2 Q13.4 4.6 15.6 8.6 V14 Q13 17.4 10 14.6 Z" fill="#2858c8"/><path d="M11.6 9 Q13 8 14.2 9.6" stroke="#9cc0ff" stroke-width="1" fill="none"/></svg>
<svg style="left:843px;top:46.8px" width="17" height="17" viewBox="0 0 17 17"><path d="M0.4 0.6 H3.6 V16 H0.4 Z" fill="#c4b484"/><path d="M0.4 12.6 H16.4 V16 H0.4 Z" fill="#c4b484"/><path d="M1.4 3 H3.6 M1.4 5.4 H3.6 M1.4 7.8 H3.6 M1.4 10.2 H3.6 M5.4 13.6 V16 M7.8 13.6 V16 M10.2 13.6 V16 M12.6 13.6 V16 M15 13.6 V16" stroke="#6a5a30" stroke-width="0.9"/><path d="M10.4 0.6 L16 3.2 V9 L10.4 11.8 L5 9 V3.2 Z" fill="#fafafa"/><path d="M5 3.2 L10.4 5.8 L16 3.2 M10.4 5.8 V11.8" stroke="#2b2b2b" stroke-width="1.1" fill="none"/></svg>
<svg style="left:864.3px;top:46.9px" width="16.4" height="16.6" viewBox="0 0 16.4 16.6"><ellipse cx="8" cy="8.6" rx="8.2" ry="6" transform="rotate(-38 8 8.6)" fill="#f0f0f4"/><circle cx="4.4" cy="6.2" r="1.1" fill="#556"/><circle cx="7.4" cy="3.6" r="1.1" fill="#556"/><circle cx="11" cy="11.6" r="1.2" fill="#556"/><circle cx="8" cy="13.4" r="1" fill="#556"/><path d="M15.8 0.2 L2.6 14.6" stroke="#2b2b2b" stroke-width="3.6"/><path d="M15.6 0.6 L6.4 10.6" stroke="#f8f8f8" stroke-width="1.9"/><path d="M6.2 10.8 L2.2 15.4" stroke="#8a84b0" stroke-width="2"/></svg>
<svg style="left:885px;top:46.6px" width="17" height="17" viewBox="0 0 17 17"><circle cx="8.5" cy="8.5" r="3.5" fill="none" stroke="#fafafa" stroke-width="2.2"/><path d="M8.5 0.6 V3.2" stroke="#fafafa" stroke-width="1.9" transform="rotate(0 8.5 8.5)"/><path d="M8.5 0.6 V3.2" stroke="#fafafa" stroke-width="1.9" transform="rotate(45 8.5 8.5)"/><path d="M8.5 0.6 V3.2" stroke="#fafafa" stroke-width="1.9" transform="rotate(90 8.5 8.5)"/><path d="M8.5 0.6 V3.2" stroke="#fafafa" stroke-width="1.9" transform="rotate(135 8.5 8.5)"/><path d="M8.5 0.6 V3.2" stroke="#fafafa" stroke-width="1.9" transform="rotate(180 8.5 8.5)"/><path d="M8.5 0.6 V3.2" stroke="#fafafa" stroke-width="1.9" transform="rotate(225 8.5 8.5)"/><path d="M8.5 0.6 V3.2" stroke="#fafafa" stroke-width="1.9" transform="rotate(270 8.5 8.5)"/><path d="M8.5 0.6 V3.2" stroke="#fafafa" stroke-width="1.9" transform="rotate(315 8.5 8.5)"/></svg>
<svg style="left:905.8px;top:46.6px" width="17" height="17" viewBox="0 0 17 17"><circle cx="8.5" cy="8.5" r="3.5" fill="none" stroke="#fafafa" stroke-width="2.2"/><path d="M8.5 0.6 V3.2" stroke="#fafafa" stroke-width="1.9" transform="rotate(0 8.5 8.5)"/><path d="M8.5 0.6 V3.2" stroke="#fafafa" stroke-width="1.9" transform="rotate(45 8.5 8.5)"/><path d="M8.5 0.6 V3.2" stroke="#fafafa" stroke-width="1.9" transform="rotate(90 8.5 8.5)"/><path d="M8.5 0.6 V3.2" stroke="#fafafa" stroke-width="1.9" transform="rotate(135 8.5 8.5)"/><path d="M8.5 0.6 V3.2" stroke="#fafafa" stroke-width="1.9" transform="rotate(180 8.5 8.5)"/><path d="M8.5 0.6 V3.2" stroke="#fafafa" stroke-width="1.9" transform="rotate(225 8.5 8.5)"/><path d="M8.5 0.6 V3.2" stroke="#fafafa" stroke-width="1.9" transform="rotate(270 8.5 8.5)"/><path d="M8.5 0.6 V3.2" stroke="#fafafa" stroke-width="1.9" transform="rotate(315 8.5 8.5)"/><path d="M2.6 2.2 L14.4 15" stroke="#2b2b2b" stroke-width="3"/><path d="M2.2 2.4 L6 6.6 M11 11.6 L14.2 15" stroke="#c82040" stroke-width="1.4"/><path d="M5.2 8.5 A3.4 3.4 0 0 1 8.5 5.1" stroke="#c82040" stroke-width="1.8" fill="none"/></svg>
<svg style="left:938px;top:47px" width="17" height="17" viewBox="0 0 17 17"><path d="M7.4 0.8 L14.4 5.8 L11.8 13.6 H3 L0.4 5.8 Z" fill="#c4c8c8"/><path d="M12.8 10 L13.5 12.3 L15.9 13 L13.5 13.7 L12.8 16.2 L12.1 13.7 L9.7 13 L12.1 12.3 Z" fill="#2fd0a0"/></svg>
<svg style="left:958.5px;top:47px" width="17" height="17" viewBox="0 0 17 17"><path d="M0.8 2 H12.8 V12.6 H0.8 Z" fill="#c4c8c8"/><path d="M12.8 10 L13.5 12.3 L15.9 13 L13.5 13.7 L12.8 16.2 L12.1 13.7 L9.7 13 L12.1 12.3 Z" fill="#2fd0a0"/></svg>
<svg style="left:979px;top:47px" width="17" height="17" viewBox="0 0 17 17"><circle cx="7" cy="7.2" r="6.6" fill="#c4c8c8"/><path d="M12.8 10 L13.5 12.3 L15.9 13 L13.5 13.7 L12.8 16.2 L12.1 13.7 L9.7 13 L12.1 12.3 Z" fill="#2fd0a0"/></svg>
<svg style="left:1001px;top:48px" width="20" height="16" viewBox="0 0 20 16"><rect x="0.6" y="0.6" width="18" height="15" fill="#e8e8e8"/><path d="M3 13 L8 6 L11 10 L13 8 L17 13 Z" fill="#777"/><circle cx="13.6" cy="4.6" r="1.6" fill="#777"/></svg>
<svg style="left:1024px;top:48px" width="16" height="16" viewBox="0 0 16 16"><path d="M0.5 15.5 L15.5 0.5 V15.5 Z" fill="#f4f4f4"/><path d="M0.5 0.5 H15.5 V15.5 H0.5 Z" fill="none" stroke="#666" stroke-width="1"/></svg>
<svg style="left:1058px;top:49px" width="15" height="15" viewBox="0 0 15 15"><rect x="0.8" y="2" width="13" height="11" fill="none" stroke="#e8e8e8" stroke-width="1.4"/><path d="M3.5 5 H11 M3.5 8 H11" stroke="#bbb" stroke-width="1"/></svg>
<svg style="left:1078.6px;top:54px" width="9" height="9" viewBox="0 0 9 9"><path d="M1 1 L8 8 M8 1 L1 8" stroke="#f4f4f4" stroke-width="1.8"/></svg>
<svg style="left:1189px;top:47px" width="16" height="16" viewBox="0 0 16 16"><path d="M3 8 L12 3 M3 8 L12 13" stroke="#8c8c8c" stroke-width="1.6"/><circle cx="3" cy="8" r="2.6" fill="#8c8c8c"/><circle cx="12.4" cy="2.8" r="2.6" fill="#8c8c8c"/><circle cx="12.4" cy="13.2" r="2.6" fill="#8c8c8c"/></svg>
<div style="left:1135.6px;top:23.6px;width:5.6px;height:1.8px;background:#e83050;transform:rotate(-14deg)"></div>
<svg style="left:1085px;top:20px;opacity:0.88" width="105" height="48" viewBox="1085 20 105 48"><g fill="#f0f0f0"><path d="M1091 25 L1097.6 24 L1099 50 Q1112 46 1115.4 54 Q1115 62 1106 63.4 L1093.4 64 Z"/><path d="M1116.6 37 L1118.4 36.8 L1118.6 42 L1116.8 42.2 Z M1119.6 37 L1121.2 36.8 L1121.4 42 L1119.8 42.2 Z"/><path d="M1118.6 46 L1122.8 45.6 L1123.2 62.6 L1119 63 Z"/><path d="M1123.6 30.4 L1129.4 29.8 L1130 63.4 L1124.4 63.8 Z"/><path d="M1131.4 46 L1135.4 45.6 L1135.8 62.4 L1131.8 62.8 Z"/><path d="M1131.6 37 L1133 36.8 L1133.2 42 L1131.8 42.2 Z M1134 37 L1135.4 36.8 L1135.6 42 L1134.2 42.2 Z"/><path d="M1139 25 L1145.8 24 L1146.6 50 Q1161 46 1164.8 54.4 Q1164 62 1155 63.2 L1141 64 Z"/><path d="M1165.8 46 L1169.8 45.6 L1170.2 61.8 L1166.2 62.2 Z"/><path d="M1166 37 L1167.4 36.8 L1167.6 42 L1166.2 42.2 Z M1168.4 37 L1169.8 36.8 L1170 42 L1168.6 42.2 Z"/><path d="M1171.2 30.4 L1176.6 29.8 L1177.2 60.4 L1171.8 60.8 Z"/><path d="M1179 46 L1183 45.6 L1183.4 62 L1179.4 62.4 Z"/><path d="M1179.2 37 L1180.6 36.8 L1180.8 42 L1179.4 42.2 Z M1181.6 37 L1183 36.8 L1183.2 42 L1181.8 42.2 Z"/></g><ellipse cx="1105.4" cy="56.6" rx="2.2" ry="1.8" fill="#3a3a3a"/><path d="M1102.6 54.2 Q1105.4 52 1108.4 54" stroke="#3a3a3a" stroke-width="0.9" fill="none"/><path d="M1151.6 53.6 L1157 56.6 L1151.8 59.6 Z" fill="#5a5a5a"/></svg>
<svg style="left:0;top:82.5px" width="808" height="505.5" viewBox="0 82.5 808 505.5"><rect x="786" y="82.5" width="2" height="506" fill="#343434"/><rect x="0" y="320" width="808" height="1" fill="#6c6c6c"/><rect x="236.3" y="164" width="11.7" height="73.6" fill="#7c0010"/><rect x="360" y="163.8" width="10.8" height="74" fill="#7c0010"/><rect x="236.3" y="164.10" width="11.7" height="2.1" fill="#cfc4bc"/><rect x="360" y="164.10" width="10.8" height="2.1" fill="#d4142c"/><rect x="236.3" y="167.16" width="11.7" height="2.1" fill="#d4142c"/><rect x="360" y="167.16" width="10.8" height="2.1" fill="#b8a89c"/><rect x="236.3" y="170.21" width="11.7" height="2.1" fill="#d4142c"/><rect x="360" y="170.21" width="10.8" height="2.1" fill="#d4142c"/><rect x="236.3" y="173.26" width="11.7" height="2.1" fill="#d4142c"/><rect x="360" y="173.26" width="10.8" height="2.1" fill="#d4142c"/><rect x="236.3" y="176.32" width="11.7" height="2.1" fill="#d4142c"/><rect x="360" y="176.32" width="10.8" height="2.1" fill="#d4142c"/><rect x="236.3" y="179.38" width="11.7" height="2.1" fill="#d4142c"/><rect x="360" y="179.38" width="10.8" height="2.1" fill="#d4142c"/><rect x="236.3" y="182.43" width="11.7" height="2.1" fill="#d4142c"/><rect x="360" y="182.43" width="10.8" height="2.1" fill="#d4142c"/><rect x="236.3" y="185.48" width="11.7" height="2.1" fill="#d4142c"/><rect x="360" y="185.48" width="10.8" height="2.1" fill="#d4142c"/><rect x="236.3" y="188.54" width="11.7" height="2.1" fill="#d4142c"/><rect x="360" y="188.54" width="10.8" height="2.1" fill="#d4142c"/><rect x="236.3" y="191.59" width="11.7" height="2.1" fill="#d4142c"/><rect x="360" y="191.59" width="10.8" height="2.1" fill="#d4142c"/><rect x="236.3" y="194.65" width="11.7" height="2.1" fill="#d4142c"/><rect x="360" y="194.65" width="10.8" height="2.1" fill="#d4142c"/><rect x="236.3" y="197.70" width="11.7" height="2.1" fill="#d4142c"/><rect x="360" y="197.70" width="10.8" height="2.1" fill="#d4142c"/><rect x="236.3" y="200.76" width="11.7" height="2.1" fill="#d4142c"/><rect x="360" y="200.76" width="10.8" height="2.1" fill="#d4142c"/><rect x="236.3" y="203.81" width="11.7" height="2.1" fill="#d4142c"/><rect x="360" y="203.81" width="10.8" height="2.1" fill="#d4142c"/><rect x="236.3" y="206.87" width="11.7" height="2.1" fill="#d4142c"/><rect x="360" y="206.87" width="10.8" height="2.1" fill="#d4142c"/><rect x="236.3" y="209.93" width="11.7" height="2.1" fill="#d4142c"/><rect x="360" y="209.93" width="10.8" height="2.1" fill="#d4142c"/><rect x="236.3" y="212.98" width="11.7" height="2.1" fill="#d4142c"/><rect x="360" y="212.98" width="10.8" height="2.1" fill="#d4142c"/><rect x="236.3" y="216.03" width="11.7" height="2.1" fill="#d4142c"/><rect x="360" y="216.03" width="10.8" height="2.1" fill="#d4142c"/><rect x="236.3" y="219.09" width="11.7" height="2.1" fill="#d4142c"/><rect x="360" y="219.09" width="10.8" height="2.1" fill="#d4142c"/><rect x="236.3" y="222.14" width="11.7" height="2.1" fill="#d4142c"/><rect x="360" y="222.14" width="10.8" height="2.1" fill="#d4142c"/><rect x="236.3" y="225.20" width="11.7" height="2.1" fill="#d4142c"/><rect x="360" y="225.20" width="10.8" height="2.1" fill="#d4142c"/><rect x="236.3" y="228.25" width="11.7" height="2.1" fill="#d4142c"/><rect x="360" y="228.25" width="10.8" height="2.1" fill="#d4142c"/><rect x="236.3" y="231.31" width="11.7" height="2.1" fill="#d4142c"/><rect x="360" y="231.31" width="10.8" height="2.1" fill="#b8a89c"/><rect x="236.3" y="234.37" width="11.7" height="2.1" fill="#cfc4bc"/><rect x="360" y="234.37" width="10.8" height="2.1" fill="#d4142c"/><rect x="236.3" y="198.4" width="11.7" height="1.8" fill="#b0a090"/><rect x="360" y="198.4" width="10.8" height="1.8" fill="#b0a090"/><rect x="248" y="163.4" width="112" height="75" fill="#000" stroke="#c4c4c4" stroke-width="0.9"/><rect x="365.4" y="240.8" width="2" height="2" fill="#d8d8d8"/><rect x="372.4" y="235.6" width="1.8" height="2.2" fill="#b0b0b0"/><path d="M81.3 305.3 H115 L121.6 311.5 V332 L115 337.8 H81.3 Z" fill="none" stroke="#c4c4c4" stroke-width="0.9"/><path d="M101.6 308 V335.5" stroke="#c4c4c4" stroke-width="0.9"/><path d="M81.3 317.2 H101.6 M81.3 326.3 H101.6" stroke="#c4c4c4" stroke-width="0.9"/><path d="M84 309 L91 316.5 M88 307.5 L96 316 M92.5 307.5 L99.5 315" stroke="#b8b8b8" stroke-width="0.8"/><path d="M83 335.5 L91 327.5 M87 336.5 L95.5 327.5 M91 336.5 L99 328" stroke="#b8b8b8" stroke-width="0.8"/><rect x="80" y="319.3" width="17" height="5.4" rx="0.8" fill="#8a8484"/><rect x="105" y="318.3" width="17" height="6.4" rx="1" fill="#e00c28"/><circle cx="121.4" cy="307.3" r="1.2" fill="#e0e0e0"/><rect x="249.3" y="392" width="6" height="7.6" fill="#a01028" stroke="#c8a0a8" stroke-width="0.6"/><rect x="258.6" y="392" width="6" height="7.6" fill="#787474" stroke="#b0b0b0" stroke-width="0.6"/><rect x="241.2" y="414.6" width="8.6" height="17" fill="#d4101c"/><rect x="271.6" y="414.6" width="8.6" height="17" fill="#8a8686"/><path d="M248.4 413 H274.6 M248.4 433.2 H274.6" stroke="#9a9a9a" stroke-width="0.9"/><path d="M254.5 429.6 V416.4 L263 429.6 V416.4 M266.1 416.4 V429.6 M263 423 H269.5" stroke="#d4d4d4" stroke-width="0.9" fill="none"/><rect x="245.4" y="440.8" width="8.6" height="16" fill="#d4101c"/><rect x="275.4" y="440.8" width="8.6" height="16" fill="#8a8686"/><path d="M252 439 H279 M252 458.3 H279" stroke="#8a8a8a" stroke-width="0.8"/><path d="M258.5 455.6 V442.4 L267 455.6 V442.4 M270.1 442.4 V455.6 M267 449 H273.5" stroke="#d4d4d4" stroke-width="0.9" fill="none"/><rect x="287.3" y="440.8" width="8.6" height="16" fill="#d4101c"/><rect x="316.8" y="440.8" width="8.6" height="16" fill="#8a8686"/><path d="M294 439 H321 M294 458.3 H321" stroke="#8a8a8a" stroke-width="0.8"/><path d="M300.3 455.6 V442.4 L308.8 455.6 V442.4 M311.9 442.4 V455.6 M308.8 449 H315.3" stroke="#d4d4d4" stroke-width="0.9" fill="none"/><rect x="251.4" y="456.8" width="20.2" height="28.4" fill="none" stroke="#b8b8b8" stroke-width="0.8"/><path d="M251.4 465.4 H271.6 M251.4 475.4 H271.6" stroke="#b8b8b8" stroke-width="0.8"/><path d="M254 457.5 L261 465 M258.5 457.5 L265.5 465 M263 457.5 L270 465 M254 484.5 L261 476 M258.5 484.5 L265.5 476 M263 484.5 L270 476" stroke="#b0b0b0" stroke-width="0.8"/><rect x="251.6" y="467.2" width="18" height="6" fill="#8a8686"/><rect x="274.6" y="467.2" width="16.4" height="6" rx="1" fill="#e00c1c"/><path d="M284.6 456 L292 467 M292 473.5 L287 480.5" stroke="#9a9a9a" stroke-width="0.8"/><rect x="292.4" y="459.5" width="54.8" height="15.6" fill="#000" stroke="#b4b4b4" stroke-width="0.9"/><circle cx="301.4" cy="467.3" r="5.6" fill="#c81838"/><circle cx="301.4" cy="467.3" r="2.2" fill="#e8a8b0"/><circle cx="338.8" cy="467.3" r="6" fill="#b4aeae"/><circle cx="338.8" cy="467.3" r="2.6" fill="#d8d4d4"/><path d="M309.8 467.3 H327" stroke="#c0c0c0" stroke-width="0.9"/><rect x="204.4" y="475" width="17" height="7.4" rx="1.6" fill="none" stroke="#9a9a9a" stroke-width="0.7"/><rect x="205.6" y="476" width="5.8" height="5.6" fill="#d01424"/><rect x="213.8" y="476" width="5.4" height="5.6" fill="#8a8686"/><rect x="222.6" y="475" width="17" height="7.4" rx="1.6" fill="none" stroke="#9a9a9a" stroke-width="0.7"/><rect x="223.8" y="476" width="5.8" height="5.6" fill="#d01424"/><rect x="232" y="476" width="5.4" height="5.6" fill="#8a8686"/><rect x="240.4" y="475" width="17" height="7.4" rx="1.6" fill="none" stroke="#9a9a9a" stroke-width="0.7"/><rect x="241.6" y="476" width="5.8" height="5.6" fill="#d01424"/><rect x="249.8" y="476" width="5.4" height="5.6" fill="#8a8686"/><rect x="292.4" y="475" width="17" height="7.4" rx="1.6" fill="none" stroke="#9a9a9a" stroke-width="0.7"/><rect x="293.6" y="476" width="5.8" height="5.6" fill="#d01424"/><rect x="301.8" y="476" width="5.4" height="5.6" fill="#8a8686"/><rect x="310.6" y="475" width="17" height="7.4" rx="1.6" fill="none" stroke="#9a9a9a" stroke-width="0.7"/><rect x="311.8" y="476" width="5.8" height="5.6" fill="#d01424"/><rect x="320" y="476" width="5.4" height="5.6" fill="#8a8686"/><rect x="258.4" y="476.4" width="5.4" height="5.6" fill="#d01424"/><rect x="203.4" y="485.8" width="3.7" height="5.6" rx="0.6" fill="#c41428"/><rect x="207.6" y="485.8" width="3.2" height="5.6" rx="0.6" fill="#968a8a"/><rect x="212.2" y="485.8" width="3.7" height="5.6" rx="0.6" fill="#c41428"/><rect x="216.4" y="485.8" width="3.2" height="5.6" rx="0.6" fill="#968a8a"/><rect x="221.0" y="485.8" width="3.7" height="5.6" rx="0.6" fill="#c41428"/><rect x="225.2" y="485.8" width="3.2" height="5.6" rx="0.6" fill="#968a8a"/><rect x="229.7" y="485.8" width="3.7" height="5.6" rx="0.6" fill="#c41428"/><rect x="233.9" y="485.8" width="3.2" height="5.6" rx="0.6" fill="#968a8a"/><rect x="238.5" y="485.8" width="3.7" height="5.6" rx="0.6" fill="#c41428"/><rect x="242.7" y="485.8" width="3.2" height="5.6" rx="0.6" fill="#968a8a"/><rect x="247.3" y="485.8" width="3.7" height="5.6" rx="0.6" fill="#c41428"/><rect x="251.5" y="485.8" width="3.2" height="5.6" rx="0.6" fill="#968a8a"/><rect x="256.1" y="485.8" width="3.7" height="5.6" rx="0.6" fill="#c41428"/><rect x="260.3" y="485.8" width="3.2" height="5.6" rx="0.6" fill="#968a8a"/><rect x="264.9" y="485.8" width="3.7" height="5.6" rx="0.6" fill="#c41428"/><rect x="269.1" y="485.8" width="3.2" height="5.6" rx="0.6" fill="#968a8a"/><rect x="273.6" y="485.8" width="3.7" height="5.6" rx="0.6" fill="#c41428"/><rect x="277.8" y="485.8" width="3.2" height="5.6" rx="0.6" fill="#968a8a"/><rect x="282.4" y="485.8" width="3.7" height="5.6" rx="0.6" fill="#c41428"/><rect x="286.6" y="485.8" width="3.2" height="5.6" rx="0.6" fill="#968a8a"/><rect x="291.2" y="485.8" width="3.7" height="5.6" rx="0.6" fill="#c41428"/><rect x="295.4" y="485.8" width="3.2" height="5.6" rx="0.6" fill="#968a8a"/><rect x="300.0" y="485.8" width="3.7" height="5.6" rx="0.6" fill="#c41428"/><rect x="304.2" y="485.8" width="3.2" height="5.6" rx="0.6" fill="#968a8a"/><rect x="308.8" y="485.8" width="3.7" height="5.6" rx="0.6" fill="#c41428"/><rect x="313.0" y="485.8" width="3.2" height="5.6" rx="0.6" fill="#968a8a"/><rect x="317.5" y="485.8" width="3.7" height="5.6" rx="0.6" fill="#a8a0a0"/><rect x="321.7" y="485.8" width="3.2" height="5.6" rx="0.6" fill="#968a8a"/><rect x="203.4" y="493.8" width="3.7" height="5.6" rx="0.6" fill="#c41428"/><rect x="207.6" y="493.8" width="3.2" height="5.6" rx="0.6" fill="#968a8a"/><rect x="212.2" y="493.8" width="3.7" height="5.6" rx="0.6" fill="#c41428"/><rect x="216.4" y="493.8" width="3.2" height="5.6" rx="0.6" fill="#968a8a"/><rect x="221.0" y="493.8" width="3.7" height="5.6" rx="0.6" fill="#c41428"/><rect x="225.2" y="493.8" width="3.2" height="5.6" rx="0.6" fill="#968a8a"/><rect x="229.7" y="493.8" width="3.7" height="5.6" rx="0.6" fill="#c41428"/><rect x="233.9" y="493.8" width="3.2" height="5.6" rx="0.6" fill="#968a8a"/><rect x="238.5" y="493.8" width="3.7" height="5.6" rx="0.6" fill="#c41428"/><rect x="242.7" y="493.8" width="3.2" height="5.6" rx="0.6" fill="#968a8a"/><rect x="247.3" y="493.8" width="3.7" height="5.6" rx="0.6" fill="#c41428"/><rect x="251.5" y="493.8" width="3.2" height="5.6" rx="0.6" fill="#968a8a"/><rect x="256.1" y="493.8" width="3.7" height="5.6" rx="0.6" fill="#c41428"/><rect x="260.3" y="493.8" width="3.2" height="5.6" rx="0.6" fill="#968a8a"/><rect x="264.9" y="493.8" width="3.7" height="5.6" rx="0.6" fill="#c41428"/><rect x="269.1" y="493.8" width="3.2" height="5.6" rx="0.6" fill="#968a8a"/><rect x="273.6" y="493.8" width="3.7" height="5.6" rx="0.6" fill="#c41428"/><rect x="277.8" y="493.8" width="3.2" height="5.6" rx="0.6" fill="#968a8a"/><rect x="282.4" y="493.8" width="3.7" height="5.6" rx="0.6" fill="#c41428"/><rect x="286.6" y="493.8" width="3.2" height="5.6" rx="0.6" fill="#968a8a"/><rect x="291.2" y="493.8" width="3.7" height="5.6" rx="0.6" fill="#c41428"/><rect x="295.4" y="493.8" width="3.2" height="5.6" rx="0.6" fill="#968a8a"/><rect x="300.0" y="493.8" width="3.7" height="5.6" rx="0.6" fill="#c41428"/><rect x="304.2" y="493.8" width="3.2" height="5.6" rx="0.6" fill="#968a8a"/><rect x="308.8" y="493.8" width="3.7" height="5.6" rx="0.6" fill="#c41428"/><rect x="313.0" y="493.8" width="3.2" height="5.6" rx="0.6" fill="#968a8a"/><rect x="317.5" y="493.8" width="3.7" height="5.6" rx="0.6" fill="#a8a0a0"/><rect x="321.7" y="493.8" width="3.2" height="5.6" rx="0.6" fill="#968a8a"/><rect x="203.4" y="501.6" width="3.7" height="5.6" rx="0.6" fill="#c41428"/><rect x="207.6" y="501.6" width="3.2" height="5.6" rx="0.6" fill="#968a8a"/><rect x="212.2" y="501.6" width="3.7" height="5.6" rx="0.6" fill="#c41428"/><rect x="216.4" y="501.6" width="3.2" height="5.6" rx="0.6" fill="#968a8a"/><rect x="221.0" y="501.6" width="3.7" height="5.6" rx="0.6" fill="#c41428"/><rect x="225.2" y="501.6" width="3.2" height="5.6" rx="0.6" fill="#968a8a"/><rect x="229.7" y="501.6" width="3.7" height="5.6" rx="0.6" fill="#c41428"/><rect x="233.9" y="501.6" width="3.2" height="5.6" rx="0.6" fill="#968a8a"/><rect x="238.5" y="501.6" width="3.7" height="5.6" rx="0.6" fill="#c41428"/><rect x="242.7" y="501.6" width="3.2" height="5.6" rx="0.6" fill="#968a8a"/><rect x="247.3" y="501.6" width="3.7" height="5.6" rx="0.6" fill="#c41428"/><rect x="251.5" y="501.6" width="3.2" height="5.6" rx="0.6" fill="#968a8a"/><rect x="256.1" y="501.6" width="3.7" height="5.6" rx="0.6" fill="#c41428"/><rect x="260.3" y="501.6" width="3.2" height="5.6" rx="0.6" fill="#968a8a"/><rect x="264.9" y="501.6" width="3.7" height="5.6" rx="0.6" fill="#c41428"/><rect x="269.1" y="501.6" width="3.2" height="5.6" rx="0.6" fill="#968a8a"/><rect x="273.6" y="501.6" width="3.7" height="5.6" rx="0.6" fill="#c41428"/><rect x="277.8" y="501.6" width="3.2" height="5.6" rx="0.6" fill="#968a8a"/><rect x="282.4" y="501.6" width="3.7" height="5.6" rx="0.6" fill="#c41428"/><rect x="286.6" y="501.6" width="3.2" height="5.6" rx="0.6" fill="#968a8a"/><rect x="291.2" y="501.6" width="3.7" height="5.6" rx="0.6" fill="#c41428"/><rect x="295.4" y="501.6" width="3.2" height="5.6" rx="0.6" fill="#968a8a"/><rect x="300.0" y="501.6" width="3.7" height="5.6" rx="0.6" fill="#c41428"/><rect x="304.2" y="501.6" width="3.2" height="5.6" rx="0.6" fill="#968a8a"/><rect x="308.8" y="501.6" width="3.7" height="5.6" rx="0.6" fill="#c41428"/><rect x="313.0" y="501.6" width="3.2" height="5.6" rx="0.6" fill="#968a8a"/><rect x="317.5" y="501.6" width="3.7" height="5.6" rx="0.6" fill="#a8a0a0"/><rect x="321.7" y="501.6" width="3.2" height="5.6" rx="0.6" fill="#968a8a"/><rect x="16.4" y="549.4" width="5.4" height="4" fill="#187868" stroke="#4aa898" stroke-width="0.5"/><rect x="16.4" y="556.4" width="5.2" height="3.6" fill="#187878"/><rect x="21.6" y="560.2" width="5" height="5" fill="#106860" stroke="#58a898" stroke-width="0.6"/><rect x="28" y="560.2" width="5.4" height="5" fill="#186c70" stroke="#68a8a0" stroke-width="0.6"/><rect x="8.2" y="570.2" width="8.8" height="7" fill="#1684b4"/><rect x="22" y="570.2" width="9" height="7" fill="#a08e98"/><rect x="8.2" y="580.2" width="8.8" height="7.4" fill="#94887e"/><rect x="22" y="580.2" width="9" height="7.4" fill="#1094a0"/></svg>
<span id="t0" style="left:21.5px;top:5.83px;font-size:12.6px;color:#9c9c9c;letter-spacing:0.128px;">Allegro PCB Designer: 3566.brd  Project: F:/traing/allegro174/PCB</span>
<span id="t1" style="left:7px;top:27.43px;font-size:10.6px;color:#f2f2f2;letter-spacing:-0.693px;">File</span>
<span id="t2" style="left:36px;top:27.43px;font-size:10.6px;color:#f2f2f2;letter-spacing:-0.422px;">Edit</span>
<span id="t3" style="left:67px;top:27.43px;font-size:10.6px;color:#f2f2f2;letter-spacing:0.073px;">View</span>
<span id="t4" style="left:103px;top:27.43px;font-size:10.6px;color:#f2f2f2;letter-spacing:-0.430px;">Add</span>
<span id="t5" style="left:135px;top:27.43px;font-size:10.6px;color:#f2f2f2;letter-spacing:-0.125px;">Display</span>
<span id="t6" style="left:182px;top:27.43px;font-size:10.6px;color:#f2f2f2;letter-spacing:-0.172px;">Setup</span>
<span id="t7" style="left:222px;top:27.43px;font-size:10.6px;color:#f2f2f2;letter-spacing:-0.410px;">Shape</span>
<span id="t8" style="left:264px;top:27.43px;font-size:10.6px;color:#f2f2f2;letter-spacing:-0.082px;">Logic</span>
<span id="t9" style="left:302px;top:27.43px;font-size:10.6px;color:#f2f2f2;letter-spacing:-0.625px;">Place</span>
<span id="t10" style="left:339px;top:27.43px;font-size:10.6px;color:#f2f2f2;letter-spacing:-0.225px;">FlowPlan</span>
<span id="t11" style="left:395px;top:27.43px;font-size:10.6px;color:#f2f2f2;letter-spacing:-0.320px;">Route</span>
<span id="t12" style="left:435px;top:27.43px;font-size:10.6px;color:#f2f2f2;letter-spacing:-0.284px;">Analyze</span>
<span id="t13" style="left:485px;top:27.43px;font-size:10.6px;color:#f2f2f2;letter-spacing:-0.089px;">Manufacture</span>
<span id="t14" style="left:556px;top:27.43px;font-size:10.6px;color:#f2f2f2;letter-spacing:-0.184px;">Tools</span>
<span id="t15" style="left:593px;top:27.43px;font-size:10.6px;color:#f2f2f2;letter-spacing:-0.266px;">Help</span>
<span id="t16" style="left:628px;top:27.43px;font-size:10.6px;color:#f2f2f2;letter-spacing:-0.538px;">DianLuJL</span>
<span id="t17" style="left:3px;top:71.34px;font-size:10px;color:#ececec;letter-spacing:-0.252px;">Start Page</span>
<span id="t18" style="left:57px;top:71.34px;font-size:10px;color:#e4f0ff;letter-spacing:0.317px;">3566</span>
<span id="t19" style="left:819px;top:72.39px;font-size:9.7px;color:#ffffff;letter-spacing:-0.297px;font-weight:bold;">Visibility</span>
<span id="t20" style="left:995.5px;top:72.39px;font-size:9.7px;color:#ffffff;letter-spacing:-0.349px;font-weight:bold;">Options</span>
<span id="t21" style="left:995.7px;top:417.59px;font-size:9.7px;color:#ffffff;letter-spacing:-0.818px;font-weight:bold;">Find</span>
<span id="t22" style="left:7px;top:596.99px;font-size:9.7px;color:#ffffff;letter-spacing:-0.396px;font-weight:bold;">Command</span>
<span id="t23" style="left:817.5px;top:101.90px;font-size:10.4px;color:#ececec;letter-spacing:0.111px;">Global visibility</span>
<span id="t24" style="left:898.5px;top:101.90px;font-size:10.4px;color:#ececec;letter-spacing:0.625px;">On</span>
<span id="t25" style="left:927.5px;top:101.90px;font-size:10.4px;color:#ececec;letter-spacing:0.664px;">Off</span>
<span id="t26" style="left:956.5px;top:101.90px;font-size:10.4px;color:#ececec;letter-spacing:-0.214px;">Last</span>
<span id="t27" style="left:817.5px;top:122.10px;font-size:10.4px;color:#ececec;letter-spacing:0.219px;">View</span>
<span id="t28" style="left:818.5px;top:151.10px;font-size:10.4px;color:#ececec;letter-spacing:-0.125px;text-decoration:underline;">Layer</span>
<span id="t29" style="left:888.3px;top:151.10px;font-size:10.4px;color:#ececec;letter-spacing:-0.595px;text-decoration:underline;">Plar</span>
<span id="t30" style="left:926.5px;top:151.10px;font-size:10.4px;color:#ececec;letter-spacing:0.078px;text-decoration:underline;">Via</span>
<span id="t31" style="left:945px;top:151.10px;font-size:10.4px;color:#ececec;letter-spacing:-0.016px;text-decoration:underline;">Pin</span>
<span id="t32" style="left:963.6px;top:151.10px;font-size:10.4px;color:#ececec;letter-spacing:0.114px;text-decoration:underline;">Drc</span>
<span id="t33" style="left:906.7px;top:151.10px;font-size:10.4px;color:#ececec;text-decoration:underline;letter-spacing:-0.35px;width:17.2px;height:14px;overflow:hidden;">Etch</span>
<span id="t34" style="left:833px;top:167.00px;font-size:10.4px;color:#ececec;letter-spacing:-0.016px;">Conductors</span>
<span id="t35" style="left:818.5px;top:186.40px;font-size:10.4px;color:#ececec;letter-spacing:-0.125px;">All Layers</span>
<span id="t36" style="left:819px;top:205.00px;font-size:10.4px;color:#ececec;letter-spacing:-0.184px;">1 Top</span>
<span id="t37" style="left:818.5px;top:220.20px;font-size:10.4px;color:#ececec;letter-spacing:0.129px;">2 Bottom</span>
<span id="t38" style="left:818.5px;top:235.60px;font-size:10.4px;color:#ececec;letter-spacing:0.144px;">Through All</span>
<span id="t39" style="left:847px;top:684.90px;font-size:10.4px;color:#ececec;letter-spacing:-0.094px;">Enable layer select mode</span>
<span id="t40" style="left:995px;top:96.10px;font-size:10.4px;color:#ececec;letter-spacing:-0.253px;">Active Class and Subclass:</span>
<span id="t41" style="left:1024.5px;top:112.90px;font-size:10.4px;color:#ececec;letter-spacing:-0.432px;">Etch</span>
<span id="t42" style="left:1044px;top:136.60px;font-size:10.4px;color:#ececec;letter-spacing:-0.383px;">Top</span>
<span id="t43" style="left:1008.3px;top:177.80px;font-size:10.4px;color:#ececec;letter-spacing:0.575px;">Mirror</span>
<span id="t44" style="left:1116.8px;top:177.80px;font-size:10.4px;color:#ececec;letter-spacing:-0.052px;">More options...</span>
<span id="t45" style="left:1001.5px;top:433.80px;font-size:10.4px;color:#ececec;letter-spacing:-0.056px;">Design Object Find Filter</span>
<span id="t46" style="left:1022px;top:459.50px;font-size:10.4px;color:#ececec;letter-spacing:0.041px;">All On</span>
<span id="t47" style="left:1111.5px;top:459.50px;font-size:10.4px;color:#ececec;letter-spacing:0.232px;">All Off</span>
<span id="t48" style="left:1014.2px;top:477.00px;font-size:10.4px;color:#ececec;letter-spacing:-0.016px;">Groups</span>
<span id="t49" style="left:1014.2px;top:495.00px;font-size:10.4px;color:#8c8c8c;letter-spacing:-0.055px;">Comps</span>
<span id="t50" style="left:1014.2px;top:513.00px;font-size:10.4px;color:#ececec;letter-spacing:-0.007px;">Symbols</span>
<span id="t51" style="left:1014.2px;top:531.00px;font-size:10.4px;color:#8c8c8c;letter-spacing:-0.108px;">Functions</span>
<span id="t52" style="left:1014.2px;top:549.00px;font-size:10.4px;color:#ececec;letter-spacing:-0.125px;">Nets</span>
<span id="t53" style="left:1014.2px;top:567.00px;font-size:10.4px;color:#ececec;letter-spacing:-0.406px;">Pins</span>
<span id="t54" style="left:1014.2px;top:585.00px;font-size:10.4px;color:#8c8c8c;letter-spacing:-0.477px;">Vias</span>
<span id="t55" style="left:1014.2px;top:603.00px;font-size:10.4px;color:#ececec;letter-spacing:-0.176px;">Fingers</span>
<span id="t56" style="left:1014.2px;top:621.00px;font-size:10.4px;color:#8c8c8c;letter-spacing:-0.275px;">Clines</span>
<span id="t57" style="left:1014.2px;top:639.00px;font-size:10.4px;color:#8c8c8c;letter-spacing:-0.411px;">Lines</span>
<span id="t58" style="left:1103.7px;top:477.00px;font-size:10.4px;color:#ececec;letter-spacing:-0.023px;">Bond wires</span>
<span id="t59" style="left:1103.7px;top:495.00px;font-size:10.4px;color:#8c8c8c;letter-spacing:-0.490px;">Shapes</span>
<span id="t60" style="left:1103.7px;top:513.00px;font-size:10.4px;color:#8c8c8c;letter-spacing:-0.059px;">Voids/Cavities</span>
<span id="t61" style="left:1103.7px;top:531.00px;font-size:10.4px;color:#8c8c8c;letter-spacing:-0.280px;">Cline segs</span>
<span id="t62" style="left:1103.7px;top:549.00px;font-size:10.4px;color:#8c8c8c;letter-spacing:-0.136px;">Other segs</span>
<span id="t63" style="left:1103.7px;top:567.00px;font-size:10.4px;color:#8c8c8c;letter-spacing:-0.109px;">Figures</span>
<span id="t64" style="left:1103.7px;top:585.00px;font-size:10.4px;color:#ececec;letter-spacing:-0.194px;">DRC errors</span>
<span id="t65" style="left:1103.7px;top:603.00px;font-size:10.4px;color:#ececec;letter-spacing:-0.688px;">Text</span>
<span id="t66" style="left:1103.7px;top:621.00px;font-size:10.4px;color:#ececec;letter-spacing:-0.300px;">Ratsnests</span>
<span id="t67" style="left:1103.7px;top:639.00px;font-size:10.4px;color:#ececec;letter-spacing:-0.413px;">Rat Ts</span>
<span id="t68" style="left:1014.5px;top:675.10px;font-size:10.4px;color:#ececec;letter-spacing:-0.206px;">By Saved Query</span>
<span id="t69" style="left:14.4px;top:620.39px;font-size:11px;color:#ececec;letter-spacing:-0.381px;">Ratsnest shown for net GND</span>
<span id="t70" style="left:14.4px;top:633.89px;font-size:11px;color:#ececec;letter-spacing:-0.344px;">last pick:  6475.0 8500.0</span>
<span id="t71" style="left:14.4px;top:647.69px;font-size:11px;color:#ececec;letter-spacing:-0.344px;">last pick:  6550.0 8575.0</span>
<span id="t72" style="left:10.5px;top:682.20px;font-size:10.4px;color:#ececec;letter-spacing:0.139px;">Command &gt;</span>
<span id="t73" style="left:7.5px;top:707.80px;font-size:10.4px;color:#0a8f0a;letter-spacing:-0.512px;">Ready</span>
<span id="t74" style="left:54px;top:707.80px;font-size:10.4px;color:#ffffff;letter-spacing:-0.089px;">Idle</span>
<span id="t75" style="left:473.6px;top:707.80px;font-size:10.4px;color:#ececec;letter-spacing:-0.583px;">Top</span>
<span id="t76" style="left:538.7px;top:707.80px;font-size:10.4px;color:#ececec;letter-spacing:-0.065px;">9675.0, 8150.0</span>
<span id="t77" style="left:633.3px;top:707.80px;font-size:10.4px;color:#ececec;letter-spacing:0.177px;">mils</span>
<span id="t78" style="left:677.5px;top:707.80px;font-size:10.4px;color:#ececec;">P</span>
<span id="t79" style="left:697.5px;top:707.80px;font-size:10.4px;color:#ececec;">A</span>
<span id="t80" style="left:972.6px;top:707.80px;font-size:10.4px;color:#ececec;letter-spacing:0.414px;">Off</span>
<span id="t81" style="left:1024.8px;top:707.80px;font-size:10.4px;color:#ececec;letter-spacing:-0.056px;">Placement edit</span>
<span id="t82" style="left:1131px;top:707.80px;font-size:10.4px;color:#a80808;letter-spacing:-1.008px;font-weight:bold;">DRC</span>
<span id="t83" style="left:1189.6px;top:707.80px;font-size:10.4px;color:#ececec;">0</span>
<span id="t84" style="left:1122.5px;top:24.89px;font-size:18.2px;color:#ffffff;letter-spacing:5.414px;transform:scaleX(0.8);transform-origin:0 0;-webkit-text-stroke:0.55px #fff;">cadence</span>
<span id="t85" style="left:1202.5px;top:24.67px;font-size:5px;color:#e8e8e8;">®</span>
<span id="t86" style="left:957.2px;top:37.22px;font-size:26.2px;color:#ffffff;letter-spacing:0.030px;font-weight:bold;opacity:0.8;transform:scaleX(0.84);transform-origin:0 0;">PCB</span>
<span id="t87" style="left:1005.6px;top:38.48px;font-size:24px;color:#ffffff;letter-spacing:1.750px;font-weight:bold;font-family:'Liberation Sans','Noto Sans CJK SC',sans-serif;opacity:0.8;">吉迷哥</span>
</div></body></html>
